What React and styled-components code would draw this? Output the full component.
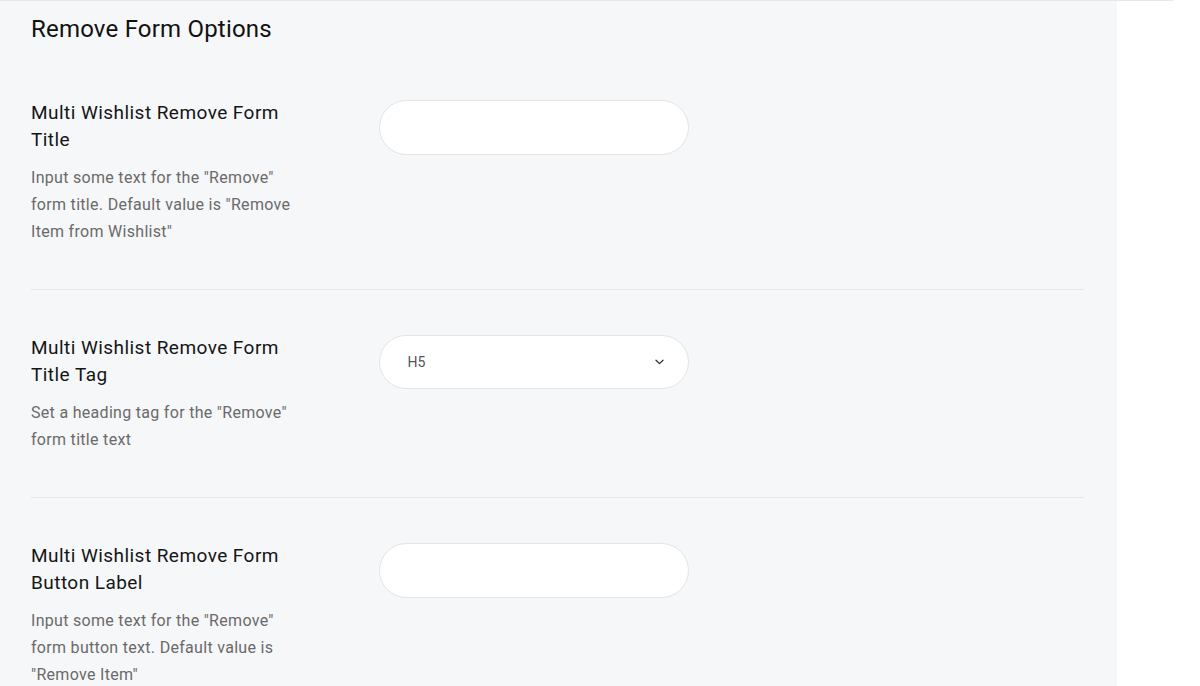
import React from "react";
import styled, { createGlobalStyle } from "styled-components";

const Global = createGlobalStyle`
  html, body { margin: 0; padding: 0; background: #ffffff; }
  body { font-family: Roboto, "Open Sans", Arial, sans-serif; -webkit-font-smoothing: antialiased; }
  * { box-sizing: border-box; }
`;

const Frame = styled.div`
  width: 1173px;
  border-top: 1px solid #e6e7ea;
`;

const Panel = styled.section`
  width: 1117px;
  height: 685px;
  overflow: hidden;
  background: #f6f7f9;
  padding: 0 33px 0 31px;
`;

const Heading = styled.h2`
  margin: 0;
  padding-top: 12px;
  font-size: 24px;
  line-height: 32px;
  font-weight: 400;
  letter-spacing: 0.2px;
  color: #111111;
`;

const Rows = styled.div`
  margin-top: 10px;
`;

const Row = styled.div`
  display: grid;
  grid-template-columns: 347.5px 310px;
  align-items: start;
  padding: 45px 0 44px;
  border-top: ${(p) => (p.$first ? "none" : "1px solid #e4e6ea")};
`;

const Info = styled.div`
  max-width: 280px;
`;

const Label = styled.div`
  font-size: 19px;
  line-height: 27px;
  letter-spacing: 0.45px;
  color: #151515;
  margin-top: -1px;
`;

const Desc = styled.p`
  margin: 11px 0 0;
  font-size: 16px;
  line-height: 27px;
  letter-spacing: 0.3px;
  color: #6a6a6a;
`;

const Field = styled.div`
  height: ${(p) => p.$h}px;
  border: 1px solid #e3e4e6;
  border-radius: 28px;
  background: #ffffff;
  display: flex;
  align-items: center;
  justify-content: space-between;
  padding: 0 24px 0 28px;
`;

const Value = styled.span`
  font-size: 14px;
  color: #555555;
`;

const Chevron = () => (
  <svg width="9" height="6" viewBox="0 0 9 6" fill="none">
    <polyline points="1,1.2 4.5,4.6 8,1.2" stroke="#2a2a2a" strokeWidth="1.2" strokeLinecap="round" strokeLinejoin="round" />
  </svg>
);

const rows = [
  {
    label: "Multi Wishlist Remove Form Title",
    desc: 'Input some text for the "Remove" form title. Default value is "Remove Item from Wishlist"',
    kind: "input",
    h: 55,
  },
  {
    label: "Multi Wishlist Remove Form Title Tag",
    desc: 'Set a heading tag for the "Remove" form title text',
    kind: "select",
    value: "H5",
    h: 54,
  },
  {
    label: "Multi Wishlist Remove Form Button Label",
    desc: 'Input some text for the "Remove" form button text. Default value is "Remove Item"',
    kind: "input",
    h: 55,
  },
];

export default function App() {
  return (
    <>
      <Global />
      <Frame>
        <Panel>
          <Heading>Remove Form Options</Heading>
          <Rows>
            {rows.map((r, i) => (
              <Row key={i} $first={i === 0}>
                <Info>
                  <Label>{r.label}</Label>
                  <Desc>{r.desc}</Desc>
                </Info>
                <Field $h={r.h}>
                  {r.kind === "select" && (
                    <>
                      <Value>{r.value}</Value>
                      <Chevron />
                    </>
                  )}
                </Field>
              </Row>
            ))}
          </Rows>
        </Panel>
      </Frame>
    </>
  );
}
